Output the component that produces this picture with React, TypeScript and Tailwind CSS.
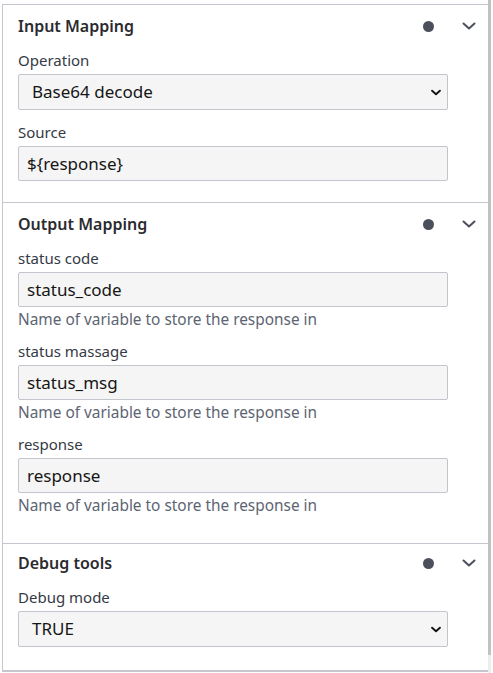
import React from 'react';

const font = { fontFamily: '"Noto Sans", "Open Sans", sans-serif' };

function Chevron({ className, weight = 2 }: { className?: string; weight?: number }) {
  return (
    <svg viewBox="0 0 14 8" className={className} fill="none" stroke="currentColor" strokeWidth={weight} strokeLinecap="round" strokeLinejoin="round">
      <path d="M1.5 1.5 7 6.5l5.5-5" />
    </svg>
  );
}

function SectionHeader({ title }: { title: string }) {
  return (
    <div className="flex items-center h-[24px]">
      <h2 className="flex-1 text-[16px] leading-[24px] font-semibold text-[#2b2b2f]">{title}</h2>
      <span className="w-[11px] h-[11px] rounded-full bg-[#4b505c] mr-[28px]" />
      <Chevron className="w-[14px] h-[8px] text-[#4b505c] mr-[12px]" />
    </div>
  );
}

function Label({ children }: { children: React.ReactNode }) {
  return <div className="text-[15px] leading-[20px] text-[#353a45] mb-[4px]">{children}</div>;
}

function SelectField({ label, value }: { label: string; value: string }) {
  return (
    <div>
      <Label>{label}</Label>
      <div className="h-[36px] w-[430px] bg-[#f5f5f5] border border-[#c4c4cc] rounded-[2px] flex items-center pl-[13px] pr-[6px]">
        <span className="flex-1 text-[17px] text-[#161616]">{value}</span>
        <Chevron className="w-[10px] h-[7px] text-[#111]" weight={2.6} />
      </div>
    </div>
  );
}

function TextField({ label, value, help }: { label: string; value: string; help?: string }) {
  return (
    <div>
      <Label>{label}</Label>
      <div className="h-[35px] w-[430px] bg-[#f5f5f5] border border-[#c4c4cc] rounded-[2px] flex items-center px-[8px]">
        <span className="text-[17px] text-[#161616]">{value}</span>
      </div>
      {help && <div className="mt-[4px] text-[15.4px] leading-[18px] text-[#5c6472]">{help}</div>}
    </div>
  );
}

export default function App() {
  const help = 'Name of variable to store the response in';
  return (
    <div className="w-[493px] h-[673px] bg-white flex overflow-hidden" style={font}>
      <div className="ml-[2px] mt-[4px] w-[486px] h-[668px] border-l border-t border-b-2 border-[#c6c6ce] flex flex-col">
        <section className="pl-[15px] pt-[9px] pb-[21px]">
          <SectionHeader title="Input Mapping" />
          <div className="mt-[12px] flex flex-col gap-[12px]">
            <SelectField label="Operation" value="Base64 decode" />
            <TextField label="Source" value="${response}" />
          </div>
        </section>
        <section className="border-t border-[#c6c6ce] pl-[15px] pt-[9px] pb-[28px]">
          <SectionHeader title="Output Mapping" />
          <div className="mt-[12px] flex flex-col gap-[12px]">
            <TextField label="status code" value="status_code" help={help} />
            <TextField label="status massage" value="status_msg" help={help} />
            <TextField label="response" value="response" help={help} />
          </div>
        </section>
        <section className="border-t border-[#c6c6ce] pl-[15px] pt-[7px] flex-1">
          <SectionHeader title="Debug tools" />
          <div className="mt-[12px] flex flex-col gap-[12px]">
            <SelectField label="Debug mode" value="TRUE" />
          </div>
        </section>
      </div>
      <div className="w-[3px] h-full flex flex-col">
        <div className="h-[655px] bg-[#c1c1c1]" />
        <div className="flex-1 bg-[#eeeeee]" />
      </div>
    </div>
  );
}
